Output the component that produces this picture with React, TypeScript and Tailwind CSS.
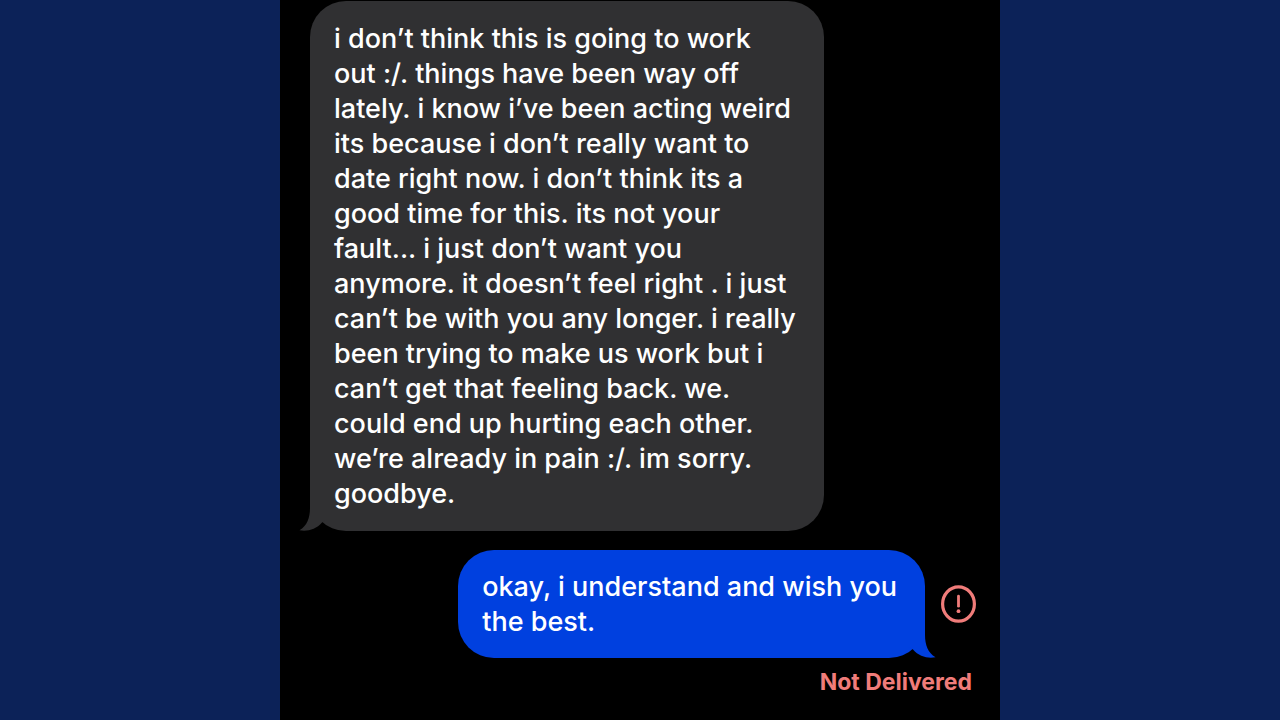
import type { ReactNode } from 'react';

const RECEIVED = [
  'i don’t think this is going to work',
  'out :/. things have been way off',
  'lately. i know i’ve been acting weird',
  'its because i don’t really want to',
  'date right now. i don’t think its a',
  'good time for this. its not your',
  'fault... i just don’t want you',
  'anymore. it doesn’t feel right . i just',
  'can’t be with you any longer. i really',
  'been trying to make us work but i',
  'can’t get that feeling back. we.',
  'could end up hurting each other.',
  'we’re already in pain :/. im sorry.',
  'goodbye.',
];

const SENT = ['okay, i understand and wish you', 'the best.'];

function Lines({ lines }: { lines: string[] }) {
  return (
    <p>
      {lines.map((line) => (
        <span key={line} className="block whitespace-nowrap">
          {line}
        </span>
      ))}
    </p>
  );
}

function Bubble({ sent = false, children }: { sent?: boolean; children: ReactNode }) {
  return (
    <div
      className={`relative rounded-[36px] pl-6 ${
        sent ? 'bg-[#0040df] py-[19px] pr-7' : 'bg-[#303032] py-5 pr-7'
      }`}
    >
      {children}
      {/* Tail, drawn for the right side and mirrored for received messages */}
      <svg
        className={`absolute bottom-0 h-10 w-9 ${
          sent ? '-right-3 text-[#0040df]' : '-left-3 -scale-x-100 text-[#303032]'
        }`}
        viewBox="0 0 36 40"
        fill="currentColor"
        aria-hidden="true"
      >
        <path d="M6 0H24V17C24 27 27 35 34.5 39.2C27 40.8 18 38.5 12 31.5L6 28Z" />
      </svg>
    </div>
  );
}

export default function App() {
  return (
    <main className="flex min-h-screen justify-center bg-[#0c2258] font-['Inter',sans-serif] text-[27px] leading-[35px] font-medium text-white">
      <section aria-label="Conversation" className="flex w-9/16 flex-col bg-black pt-px pr-6 pl-[30px]">
        <div className="self-start">
          <Bubble>
            <Lines lines={RECEIVED} />
          </Bubble>
        </div>

        <div className="mt-[19px] flex items-center gap-4 self-end">
          <Bubble sent>
            <Lines lines={SENT} />
          </Bubble>
          <button type="button" aria-label="Message not delivered" className="text-[#f07c7a]">
            <svg className="h-[38px] w-[35px]" viewBox="0 0 35 38" fill="none" stroke="currentColor" aria-hidden="true">
              <ellipse cx="17.5" cy="19" rx="15.9" ry="17.2" strokeWidth="3.2" />
              <path d="M17.5 11.2V21.2" strokeWidth="2.8" strokeLinecap="round" />
              <circle cx="17.5" cy="26.2" r="1.9" fill="currentColor" stroke="none" />
            </svg>
          </button>
        </div>

        <p className="mt-2 self-end pr-1 text-[23px] leading-8 font-bold text-[#f07c7a]">Not Delivered</p>
      </section>
    </main>
  );
}
